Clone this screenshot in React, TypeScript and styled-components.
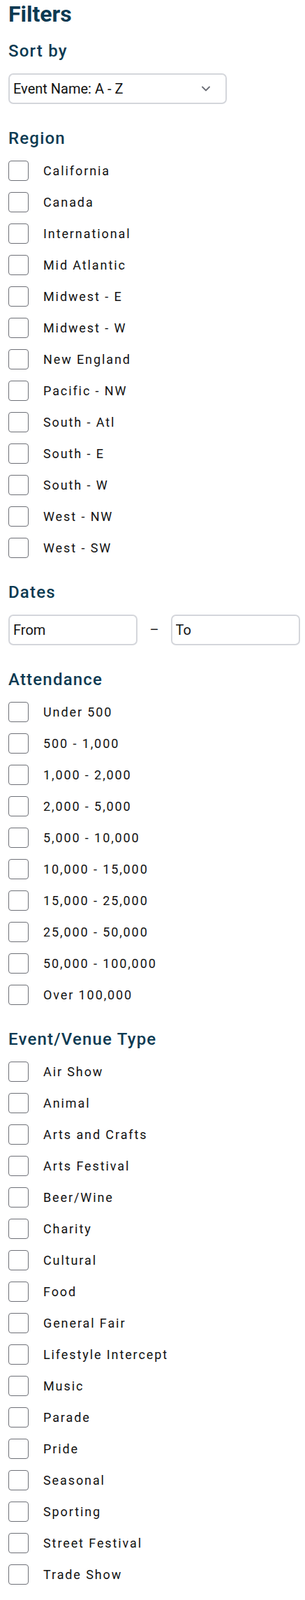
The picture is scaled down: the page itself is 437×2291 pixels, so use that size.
import React from 'react';
import styled, { createGlobalStyle } from 'styled-components';

const GlobalStyle = createGlobalStyle`
  body {
    margin: 0;
    background: #ffffff;
    font-family: Roboto, 'Liberation Sans', sans-serif;
  }
  * {
    box-sizing: border-box;
  }
`;

const Page = styled.div`
  padding: 0 7px 0 12px;
  color: #111111;
`;

const Title = styled.h1`
  margin: 0 0 17px;
  font-size: 32px;
  line-height: 40px;
  font-weight: 700;
  color: #0c3a52;
`;

const Section = styled.section`
  & + & {
    margin-top: 33px;
  }
`;

const Heading = styled.h2`
  margin: 0 0 16px;
  font-size: 24px;
  line-height: 32px;
  font-weight: 500;
  letter-spacing: 1.2px;
  color: #0c3a52;
`;

const SelectBox = styled.div`
  display: flex;
  align-items: center;
  justify-content: space-between;
  width: 313px;
  height: 44px;
  padding: 0 22px 0 5px;
  border: 2px solid #d4d6db;
  border-radius: 7px;
  font-size: 20px;
  color: #111111;
`;

const DateRow = styled.div`
  display: flex;
  align-items: center;
  gap: 17px;
`;

const DateInput = styled.input`
  flex: 1;
  min-width: 0;
  height: 44px;
  padding: 0 5px;
  border: 2px solid #d4d6db;
  border-radius: 7px;
  font-family: Roboto, 'Liberation Sans', sans-serif;
  font-size: 20px;
  color: #111111;
  outline: none;

  &::placeholder {
    color: #111111;
  }
`;

const Dash = styled.span`
  font-size: 20px;
  color: #222222;
`;

const List = styled.div`
  display: flex;
  flex-direction: column;
  gap: 16px;
`;

const Option = styled.label`
  display: flex;
  align-items: center;
  gap: 21px;
  height: 29px;
  font-size: 18px;
  letter-spacing: 1.9px;
  color: #111111;
`;

const Box = styled.span`
  flex: none;
  width: 29px;
  height: 29px;
  border: 1.5px solid #6e7077;
  border-radius: 4px;
  background: #ffffff;
`;

const regions = [
  'California',
  'Canada',
  'International',
  'Mid Atlantic',
  'Midwest - E',
  'Midwest - W',
  'New England',
  'Pacific - NW',
  'South - Atl',
  'South - E',
  'South - W',
  'West - NW',
  'West - SW',
];

const attendance = [
  'Under 500',
  '500 - 1,000',
  '1,000 - 2,000',
  '2,000 - 5,000',
  '5,000 - 10,000',
  '10,000 - 15,000',
  '15,000 - 25,000',
  '25,000 - 50,000',
  '50,000 - 100,000',
  'Over 100,000',
];

const venueTypes = [
  'Air Show',
  'Animal',
  'Arts and Crafts',
  'Arts Festival',
  'Beer/Wine',
  'Charity',
  'Cultural',
  'Food',
  'General Fair',
  'Lifestyle Intercept',
  'Music',
  'Parade',
  'Pride',
  'Seasonal',
  'Sporting',
  'Street Festival',
  'Trade Show',
];

const CheckList = ({ items }: { items: string[] }) => (
  <List>
    {items.map((item) => (
      <Option key={item}>
        <Box />
        {item}
      </Option>
    ))}
  </List>
);

const Chevron = () => (
  <svg width="12" height="8" viewBox="0 0 12 8" fill="none">
    <path d="M1 1.5l5 5 5-5" stroke="#6b6e76" strokeWidth="1.8" strokeLinecap="round" strokeLinejoin="round" />
  </svg>
);

const App = () => (
  <>
    <GlobalStyle />
    <Page>
      <Title>Filters</Title>
      <Section>
        <Heading>Sort by</Heading>
        <SelectBox>
          <span>Event Name: A - Z</span>
          <Chevron />
        </SelectBox>
      </Section>
      <Section>
        <Heading>Region</Heading>
        <CheckList items={regions} />
      </Section>
      <Section>
        <Heading>Dates</Heading>
        <DateRow>
          <DateInput placeholder="From" />
          <Dash>–</Dash>
          <DateInput placeholder="To" />
        </DateRow>
      </Section>
      <Section>
        <Heading>Attendance</Heading>
        <CheckList items={attendance} />
      </Section>
      <Section>
        <Heading>Event/Venue Type</Heading>
        <CheckList items={venueTypes} />
      </Section>
    </Page>
  </>
);

export default App;
